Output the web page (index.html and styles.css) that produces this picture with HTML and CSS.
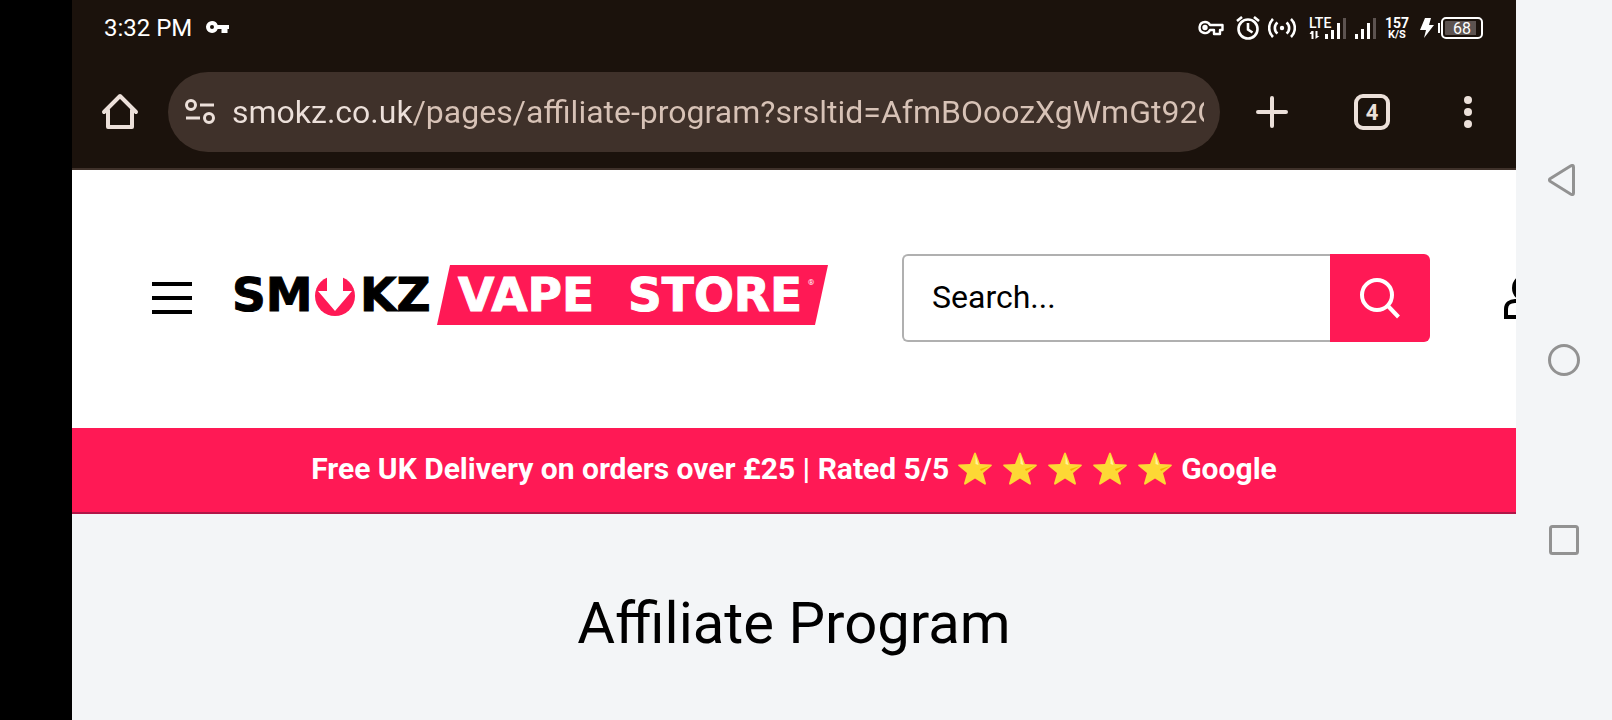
FILE: index.html
```html
<!DOCTYPE html>
<html lang="en">
<head>
  <meta charset="UTF-8" />
  <meta name="viewport" content="width=device-width, initial-scale=1" />
  <title>Affiliate Program</title>
  <link rel="stylesheet" href="styles.css">
</head>
<body>
  <div class="device">
    <div class="screen">
      <div class="status-bar">
        <span class="clock">3:32 PM</span>
        <svg class="vpn-key" width="24" height="14" viewBox="0 0 24 14">
          <path fill="#fff" fill-rule="evenodd" d="M6 0a6 6 0 0 1 5.700 4H23v4h-1.500v4h-6V8h-3.800A6 6 0 1 1 6 0zM6 4a2 2 0 1 0 0 4 2 2 0 0 0 0-4z"/>
        </svg>
        <div class="status-icons">
          <svg width="26" height="16" viewBox="0 0 26 16" fill="none" stroke="#fff" stroke-width="2.400">
            <path stroke-linejoin="round" d="M7 2a5.500 5.500 0 1 0 5 8h4v4h6v-4h2.500V5H12a5.500 5.500 0 0 0-5-3z"/>
            <circle cx="7" cy="7.500" r="1.500" fill="#fff"/>
          </svg>
          <svg class="alarm" width="24" height="24" viewBox="0 0 24 24" fill="none" stroke="#fff" stroke-width="2.600">
            <circle cx="12" cy="13" r="9.500"/>
            <path d="M12 7v6.500l4.500 3M1 5l5-4M23 5l-5-4"/>
          </svg>
          <svg class="hotspot" width="28" height="20" viewBox="0 0 28 20" fill="none" stroke="#fff" stroke-width="2.600">
            <circle cx="14" cy="10" r="2.200" fill="#fff" stroke="none"/>
            <path d="M9.500 4.500a7 7 0 0 0 0 11M18.500 4.500a7 7 0 0 1 0 11M5 1a12.500 12.500 0 0 0 0 18M23 1a12.500 12.500 0 0 1 0 18"/>
          </svg>
          <svg class="lte" width="38" height="24" viewBox="0 0 38 24">
            <text class="lte-label" x="0" y="12">LTE</text>
            <path fill="#fff" d="M2.500 15h2v8h-2v-5H.500zM6.500 15h2v5h2l-4 3z"/>
            <path fill="#fff" d="M16 18h3v5h-3zM22 14h3v9h-3zM28 7h3v16h-3z"/>
            <path fill="#5d5350" d="M34 2h3v21h-3z"/>
          </svg>
          <svg class="signal" width="22" height="24" viewBox="0 0 22 24">
            <path fill="#fff" d="M0 18h3v5H0zM6 13h3v10H6zM12 7h3v16h-3z"/>
            <path fill="#5d5350" d="M18 2h3v21h-3z"/>
          </svg>
          <div class="speed"><span>157</span><span class="unit">K/S</span></div>
          <svg class="bolt" width="14" height="20" viewBox="0 0 14 20">
            <path fill="#fff" d="M5 0h6L9 7h5L4 20l2-8H0z"/>
          </svg>
          <div class="battery">68</div>
        </div>
      </div>

      <div class="toolbar">
        <button class="tool-btn home-btn" aria-label="Home">
          <svg width="38" height="38" viewBox="0 0 38 38" fill="none" stroke="#ece0da" stroke-width="4" stroke-linecap="round" stroke-linejoin="round">
            <path d="M3 19 19 3l16 16M7 17v17h24V17"/>
          </svg>
        </button>
        <div class="omnibox">
          <svg width="30" height="26" viewBox="0 0 30 26" fill="none" stroke="#ece0da" stroke-width="3">
            <circle cx="6" cy="6" r="4.500"/>
            <circle cx="24" cy="19" r="4.500"/>
            <path d="M15 6h14M1 19h14"/>
          </svg>
          <input class="url" type="text" aria-label="Address" value="smokz.co.uk/pages/affiliate-program?srsltid=AfmBOoozXgWmGt92O" />
        </div>
        <button class="tool-btn new-tab-btn" aria-label="New tab">
          <svg width="32" height="32" viewBox="0 0 32 32" stroke="#ece0da" stroke-width="4" stroke-linecap="round">
            <path d="M16 2v28M2 16h28"/>
          </svg>
        </button>
        <button class="tool-btn tabs-btn" aria-label="Open tabs">4</button>
        <button class="tool-btn menu-btn" aria-label="Menu">
          <svg width="8" height="32" viewBox="0 0 8 32" fill="#ece0da">
            <circle cx="4" cy="4" r="4"/>
            <circle cx="4" cy="16" r="4"/>
            <circle cx="4" cy="28" r="4"/>
          </svg>
        </button>
      </div>

      <header class="site-header">
        <button class="hamburger" aria-label="Site menu"><i></i><i></i><i></i></button>
        <a class="logo" href="#" aria-label="Smokz Vape Store">
          <svg width="596" height="60" viewBox="0 0 596 60">
            <text class="logo-text" x="0" y="46">SM</text>
            <circle cx="103" cy="31" r="20" fill="#ff1955"/>
            <path fill="#fff" d="M95 10h16v16h9L103 46 86 26h9z"/>
            <text class="logo-text" x="128" y="46">KZ</text>
            <path fill="#ff1955" d="M218 0h378l-13 60H205z"/>
            <text class="logo-text light" x="226" y="46">VAPE</text>
            <text class="logo-text light" x="396" y="46">STORE</text>
            <text class="logo-mark" x="576" y="20">®</text>
          </svg>
        </a>
        <form class="search">
          <input type="text" class="search-input" placeholder="Search..." aria-label="Search" />
          <button type="button" class="search-btn" aria-label="Search">
            <svg width="42" height="42" viewBox="0 0 42 42" fill="none" stroke="#fff" stroke-width="4">
              <circle cx="18" cy="18" r="15"/>
              <path d="m29 29 10.500 11"/>
            </svg>
          </button>
        </form>
        <a class="account" href="#" aria-label="Account">
          <svg width="48" height="42" viewBox="0 0 48 42" fill="none" stroke="#000" stroke-width="4">
            <ellipse cx="22" cy="11" rx="12" ry="12"/>
            <path d="M2 40V32c0-5 4-8 9-8h22c5 0 9 3 9 8v8z"/>
          </svg>
        </a>
      </header>

      <div class="promo">
        <span>Free UK Delivery on orders over £25 | Rated 5/5</span>
        <span class="stars">
          <svg class="star" viewBox="0 0 34 33"><use href="#star"/></svg>
          <svg class="star" viewBox="0 0 34 33"><use href="#star"/></svg>
          <svg class="star" viewBox="0 0 34 33"><use href="#star"/></svg>
          <svg class="star" viewBox="0 0 34 33"><use href="#star"/></svg>
          <svg class="star" viewBox="0 0 34 33"><use href="#star"/></svg>
        </span>
        <span>Google</span>
      </div>

      <main class="content">
        <h1>Affiliate Program</h1>
      </main>
    </div>

    <nav class="system-nav">
      <button class="nav-btn" aria-label="Back">
        <svg width="32" height="32" viewBox="0 0 32 32"><path d="M2 14.800 22.500 2Q25.500.500 25.500 3v26q0 2.500-3 1L2 17.200q-1-1.200 0-2.400z"/></svg>
      </button>
      <button class="nav-btn" aria-label="Home screen">
        <svg width="32" height="32" viewBox="0 0 32 32"><circle cx="16" cy="16" r="14.500"/></svg>
      </button>
      <button class="nav-btn" aria-label="Recent apps">
        <svg width="32" height="32" viewBox="0 0 32 32"><rect x="2.500" y="2.500" width="27" height="27" rx="2"/></svg>
      </button>
    </nav>
  </div>

  <svg class="defs" width="0" height="0">
    <symbol id="star" viewBox="0 0 34 33">
      <path fill="#fdd835" d="M16 1.500q1-2 2 0l4 10.500 11 .500q1.500.500.500 1.500L25 21l3 10.500q0 1.500-1.500 1L17 26.500l-9.500 6q-1.500.500-1.500-1L9 21 .500 14q-1-1 .500-1.500L12 12z"/>
      <path fill="#fff59d" d="m17.500 3 3 10-3-1z"/>
      <path fill="#f4b400" d="m32 14-10 3 1 2z"/>
    </symbol>
  </svg>
</body>
</html>
```

FILE: styles.css
```css
* {
  box-sizing: border-box;
}

body {
  margin: 0;
  font-family: Roboto, "Liberation Sans", sans-serif;
  background: #000;
  color: #000;
}

button {
  padding: 0;
  border: none;
  background: none;
  font-family: inherit;
  cursor: pointer;
}

svg {
  display: block;
  flex: none;
}

.defs {
  position: absolute;
}

.device {
  display: flex;
  min-height: 100vh;
  padding-left: 72px;
}

.screen {
  flex: 1;
  min-width: 0;
  display: flex;
  flex-direction: column;
  background: #f3f5f7;
}

/* status bar */
.status-bar {
  display: flex;
  align-items: center;
  height: 56px;
  padding: 0 33px 0 32px;
  background: #1b120c;
  color: #fff;
}

.clock {
  font-size: 24px;
  line-height: 28px;
}

.vpn-key {
  margin-left: 14px;
}

.status-icons {
  display: flex;
  align-items: center;
  margin-left: auto;
}

.alarm {
  margin-left: 12px;
}

.hotspot {
  margin-left: 8px;
}

.lte {
  margin-left: 13px;
}

.lte-label {
  font-size: 14px;
  font-weight: 500;
  fill: #fff;
}

.signal {
  margin-left: 8px;
}

.speed {
  display: flex;
  flex-direction: column;
  align-items: center;
  margin-left: 8px;
  font-size: 14px;
  font-weight: 700;
  line-height: 12px;
}

.speed .unit {
  font-size: 11px;
  line-height: 11px;
}

.bolt {
  margin-left: 11px;
}

.battery {
  position: relative;
  width: 42px;
  height: 22px;
  margin-left: 7px;
  border: 2px solid #fff;
  border-radius: 5px;
  background: linear-gradient(90deg, #5d5350 92%, transparent 92%) content-box;
  padding: 2px;
  font-size: 16px;
  line-height: 15px;
  text-align: center;
}

.battery::before {
  content: "";
  position: absolute;
  left: -5px;
  top: 4px;
  width: 2px;
  height: 10px;
  background: #fff;
}

/* browser toolbar */
.toolbar {
  display: flex;
  align-items: center;
  height: 114px;
  padding: 0 28px;
  background: #1b120c;
  border-bottom: 2px solid #3f312a;
}

.tool-btn {
  flex: none;
  display: flex;
  align-items: center;
  justify-content: center;
  color: #ece0da;
}

.home-btn {
  width: 40px;
  height: 40px;
}

.omnibox {
  flex: 1;
  min-width: 0;
  display: flex;
  align-items: center;
  height: 80px;
  margin-left: 28px;
  padding: 0 16px 0 17px;
  border-radius: 40px;
  background: #3f312a;
}

.url {
  flex: 1;
  min-width: 0;
  height: 48px;
  margin-left: 17px;
  padding: 0;
  border: none;
  outline: none;
  font-family: inherit;
  font-size: 32px;
  color: transparent;
  /* host is brighter than the path */
  background: linear-gradient(90deg, #ece0da 180px, #d7c2b6 180px);
  -webkit-background-clip: text;
  background-clip: text;
}

.new-tab-btn {
  width: 40px;
  height: 40px;
  margin-left: 32px;
}

.tabs-btn {
  width: 36px;
  height: 36px;
  margin-left: 62px;
  border: 4px solid #ece0da;
  border-radius: 9px;
  font-size: 22px;
  font-weight: 700;
}

.menu-btn {
  width: 40px;
  height: 40px;
  margin-left: 58px;
}

/* shop header */
.site-header {
  display: flex;
  align-items: center;
  height: 258px;
  padding: 0 0 2px 80px;
  background: #fff;
  overflow: hidden;
}

.hamburger {
  flex: none;
  display: flex;
  flex-direction: column;
  gap: 10px;
  width: 40px;
}

.hamburger i {
  height: 4px;
  background: #000;
}

.logo {
  flex: none;
  margin-left: 40px;
  padding-bottom: 6px;
}

.logo-text {
  font-family: "DejaVu Sans", sans-serif;
  font-size: 47px;
  font-weight: 700;
  stroke: #000;
  stroke-width: 1px;
}

.logo-text.light {
  fill: #fff;
  stroke: #fff;
}

.logo-mark {
  font-size: 8px;
  fill: #fff;
}

.search {
  flex: 1;
  min-width: 240px;
  display: flex;
  height: 88px;
  margin: 0 74px;
}

.search-input {
  flex: 1;
  min-width: 0;
  padding: 0 28px 2px;
  border: 2px solid #b0b0b0;
  border-right: none;
  border-radius: 6px 0 0 6px;
  background: #fff;
  font-family: inherit;
  font-size: 32px;
  color: #000;
}

.search-input::placeholder {
  color: #000;
  opacity: 1;
}

.search-btn {
  flex: none;
  display: flex;
  align-items: center;
  justify-content: center;
  width: 100px;
  border-radius: 0 6px 6px 0;
  background: #ff1955;
}

/* runs past the right edge of the header */
.account {
  flex: none;
  margin-right: -36px;
}

.promo {
  display: flex;
  align-items: center;
  justify-content: center;
  gap: 9px;
  height: 86px;
  padding-bottom: 3px;
  border-bottom: 2px solid #b01648;
  background: #ff1955;
  color: #fff;
  font-size: 30px;
  font-weight: 700;
  line-height: 40px;
}

.stars {
  display: flex;
  gap: 11px;
}

.star {
  width: 34px;
  height: 33px;
}

.content {
  flex: 1;
  padding: 74px 20px 40px;
  text-align: center;
}

.content h1 {
  margin: 0;
  font-size: 58px;
  font-weight: 400;
  line-height: 70px;
}

/* system buttons */
.system-nav {
  flex: none;
  display: flex;
  flex-direction: column;
  align-items: center;
  justify-content: space-around;
  width: 96px;
  padding: 90px 0;
  background: #f3f5f7;
}

.nav-btn svg {
  fill: none;
  stroke: #929292;
  stroke-width: 3;
}
```
